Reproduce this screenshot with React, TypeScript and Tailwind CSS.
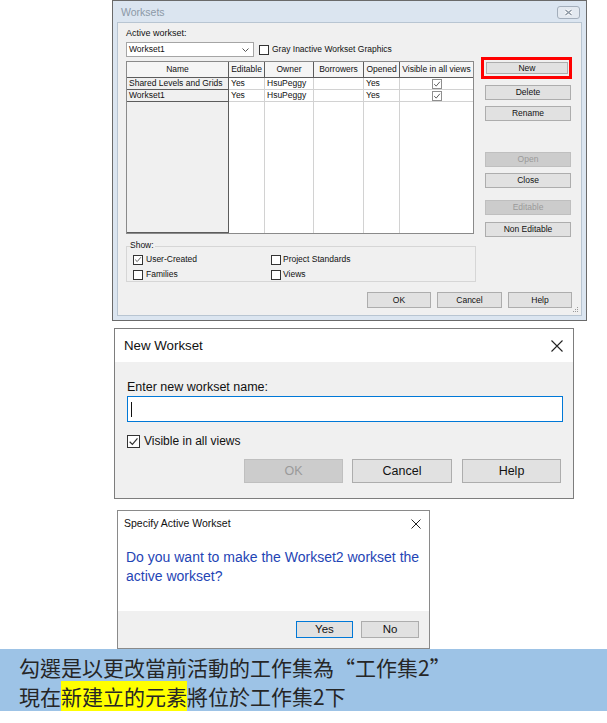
import React from "react";

const sans = "font-['Liberation_Sans',Arial,sans-serif]";

function Check({ size }: { size: number }) {
  return (
    <svg width={size - 2} height={size - 2} viewBox="0 0 10 10" className="block">
      <path d="M1.5 5.2 L4 7.6 L8.6 2.2" fill="none" stroke="#333" strokeWidth={size > 11 ? 1.1 : 1} />
    </svg>
  );
}

function Box({ checked, className }: { checked?: boolean; className: string }) {
  return (
    <div className={`flex items-center justify-center bg-white border ${className}`}>
      {checked && <Check size={11} />}
    </div>
  );
}

function WinBtn({
  label,
  disabled,
  className,
}: {
  label: string;
  disabled?: boolean;
  className: string;
}) {
  return (
    <div
      className={`flex items-center justify-center border ${
        disabled
          ? "bg-[#cccccc] border-[#bfbfbf] text-[#9a9a9a]"
          : "bg-[#e1e1e1] border-[#adadad] text-[#111]"
      } ${className}`}
    >
      {label}
    </div>
  );
}

const cols = [
  { name: "Name", w: "w-[102px]" },
  { name: "Editable", w: "w-[36px]" },
  { name: "Owner", w: "w-[49px]" },
  { name: "Borrowers", w: "w-[50px]" },
  { name: "Opened", w: "w-[36px]" },
  { name: "Visible in all views", w: "w-[73px]" },
];

const rows = [
  ["Shared Levels and Grids", "Yes", "HsuPeggy", "", "Yes"],
  ["Workset1", "Yes", "HsuPeggy", "", "Yes"],
];

function WorksetsTable() {
  return (
    <div className="w-[348px] h-[173px] border border-[#8a8a8a] bg-white flex flex-col text-[8.5px] text-[#111]">
      <div className="flex h-[16px]">
        {cols.map((c, i) => (
          <div
            key={c.name}
            className={`${c.w} flex items-center justify-center bg-[#f5f5f5] border-b border-[#5c5c5c] ${
              i < cols.length - 1 ? "border-r" : ""
            }`}
          >
            {c.name}
          </div>
        ))}
      </div>
      {rows.map((r) => (
        <div key={r[0]} className="flex h-[12px]">
          <div className="w-[102px] flex items-center pl-[2px] bg-[#f0f0f0] border-r border-b border-[#5c5c5c]">
            {r[0]}
          </div>
          {r.slice(1).map((v, i) => (
            <div
              key={i}
              className={`${cols[i + 1].w} flex items-center pl-[2px] border-r border-b border-[#d2d2d2]`}
            >
              {v}
            </div>
          ))}
          <div className="w-[73px] flex items-center justify-center border-b border-[#d2d2d2]">
            <div className="w-[10px] h-[10px] border border-[#8f8f8f] bg-white flex items-center justify-center">
              <Check size={10} />
            </div>
          </div>
        </div>
      ))}
      <div className="flex flex-1">
        <div className="w-[102px] bg-[#f0f0f0] border-r border-b border-[#5c5c5c]" />
        {cols.slice(1, 5).map((c) => (
          <div key={c.name} className={`${c.w} border-r border-[#d2d2d2]`} />
        ))}
        <div className="w-[73px]" />
      </div>
    </div>
  );
}

function WorksetsDialog() {
  return (
    <div className={`ml-[112px] w-[475px] h-[321px] border border-[#6a6a6a] bg-[#dbe5f0] flex flex-col ${sans}`}>
      <div className="h-[21px] flex items-center justify-between pl-[8px] pr-[6px]">
        <span className="text-[10.5px] text-[#8c99a7] mt-[3px]">Worksets</span>
        <div className="w-[23px] h-[13px] mt-[2px] border border-[#a3aebb] rounded-[3px] bg-[#e3e9f0] flex items-center justify-center">
          <svg width="9" height="7" viewBox="0 0 9 7">
            <path d="M1.5 1 L7.5 6 M7.5 1 L1.5 6" stroke="#fff" strokeWidth="3" />
            <path d="M1.5 1 L7.5 6 M7.5 1 L1.5 6" stroke="#8a96a3" strokeWidth="1.4" />
          </svg>
        </div>
      </div>
      <div className="relative mx-[4px] mb-[4px] flex-1 bg-[#f0f0f0] border border-[#b8c5d2] pl-[8px] pr-[8px] text-[#111]">
        <div className="pt-[5px] text-[9px] leading-[11px]">Active workset:</div>
        <div className="mt-[3px] flex items-center h-[15px]">
          <div className="w-[128px] h-[15px] border border-[#a5a5a5] bg-white flex items-center justify-between pl-[2px] pr-[4px] text-[8.5px]">
            <span>Workset1</span>
            <svg width="7" height="4" viewBox="0 0 7 4">
              <path d="M0.5 0.5 L3.5 3.5 L6.5 0.5" fill="none" stroke="#555" strokeWidth="1" />
            </svg>
          </div>
          <Box className="ml-[5px] w-[10px] h-[10px] border-[#333]" />
          <span className="ml-[3px] text-[8.5px]">Gray Inactive Workset Graphics</span>
        </div>
        <div className="flex">
          <div className="mt-[4px]">
            <WorksetsTable />
          </div>
          <div className="ml-[7px] w-[91px] flex flex-col text-[8.5px]">
            <div className="h-[22px] border-[3px] border-[#ff0000] pt-[2px] pl-[2px] pr-[1px]">
              <WinBtn label="New" className="h-[12px] w-full" />
            </div>
            <WinBtn label="Delete" className="mt-[6px] ml-[4px] w-[86px] h-[15px]" />
            <WinBtn label="Rename" className="mt-[6px] ml-[4px] w-[86px] h-[15px]" />
            <WinBtn label="Open" disabled className="mt-[31px] ml-[4px] w-[86px] h-[15px]" />
            <WinBtn label="Close" className="mt-[6px] ml-[4px] w-[86px] h-[15px]" />
            <WinBtn label="Editable" disabled className="mt-[12px] ml-[4px] w-[86px] h-[15px]" />
            <WinBtn label="Non Editable" className="mt-[7px] ml-[4px] w-[86px] h-[15px]" />
          </div>
        </div>
        <div className="relative mt-[9px] w-[350px] h-[36px] border border-[#d6d6d6] text-[8.5px] leading-[11px]">
          <span className="absolute left-[3px] top-[-7px] bg-[#f0f0f0] pr-[1px] leading-[10px]">Show:</span>
          <div className="flex pt-[7px] pl-[6px]">
            <div className="w-[138px] flex items-center">
              <Box checked className="w-[10px] h-[10px] border-[#333]" />
              <span className="ml-[3px]">User-Created</span>
            </div>
            <div className="flex items-center">
              <Box className="w-[10px] h-[10px] border-[#333]" />
              <span className="ml-[2px]">Project Standards</span>
            </div>
          </div>
          <div className="flex pt-[4px] pl-[6px]">
            <div className="w-[138px] flex items-center">
              <Box className="w-[10px] h-[10px] border-[#333]" />
              <span className="ml-[3px]">Families</span>
            </div>
            <div className="flex items-center">
              <Box className="w-[10px] h-[10px] border-[#333]" />
              <span className="ml-[2px]">Views</span>
            </div>
          </div>
        </div>
        <div className="mt-[10px] flex justify-end gap-[6px] pr-[1px] text-[8.5px]">
          <WinBtn label="OK" className="w-[64px] h-[16px]" />
          <WinBtn label="Cancel" className="w-[65px] h-[16px]" />
          <WinBtn label="Help" className="w-[64px] h-[16px]" />
        </div>
        <svg className="absolute right-[2px] bottom-[2px]" width="7" height="7" viewBox="0 0 7 7">
          <rect x="5" y="1" width="1" height="1" fill="#9a9a9a" />
          <rect x="3" y="3" width="1" height="1" fill="#9a9a9a" />
          <rect x="5" y="3" width="1" height="1" fill="#9a9a9a" />
          <rect x="1" y="5" width="1" height="1" fill="#9a9a9a" />
          <rect x="3" y="5" width="1" height="1" fill="#9a9a9a" />
          <rect x="5" y="5" width="1" height="1" fill="#9a9a9a" />
        </svg>
      </div>
    </div>
  );
}

function NewWorksetDialog() {
  return (
    <div className={`mt-[7px] ml-[114px] w-[460px] h-[171px] border border-[#7d7d7d] flex flex-col ${sans}`}>
      <div className="h-[33px] bg-white flex items-center justify-between pl-[9px] pr-[10px]">
        <span className="text-[13.3px] text-[#111]">New Workset</span>
        <svg width="12" height="12" viewBox="0 0 12 12">
          <path d="M0.5 0.5 L11.5 11.5 M11.5 0.5 L0.5 11.5" stroke="#222" strokeWidth="1.1" />
        </svg>
      </div>
      <div className="flex-1 bg-[#f0f0f0] pl-[12px] pr-[12px] text-[#111]">
        <div className="mt-[18px] text-[12.5px] leading-[15px]">Enter new workset name:</div>
        <div className="mt-[1px] w-[436px] h-[26px] border border-[#0078d7] bg-white flex items-center pl-[3px]">
          <div className="w-[1px] h-[15px] bg-[#111]" />
        </div>
        <div className="mt-[13px] h-[13px] flex items-center">
          <div className="w-[13px] h-[13px] border border-[#333] bg-white flex items-center justify-center">
            <Check size={13} />
          </div>
          <span className="ml-[4px] text-[12px] leading-[13px]">Visible in all views</span>
        </div>
        <div className="mt-[11px] flex justify-end text-[12.5px]">
          <WinBtn label="OK" disabled className="w-[99px] h-[24px]" />
          <WinBtn label="Cancel" className="ml-[9px] w-[100px] h-[24px]" />
          <WinBtn label="Help" className="ml-[10px] w-[99px] h-[24px]" />
        </div>
      </div>
    </div>
  );
}

function SpecifyDialog() {
  return (
    <div className={`mt-[11px] ml-[117px] w-[313px] h-[139px] border border-[#8a8a8a] flex flex-col ${sans}`}>
      <div className="bg-white h-[100px]">
        <div className="h-[26px] flex items-center justify-between pl-[6px] pr-[8px]">
          <span className="text-[10.5px] text-[#111]">Specify Active Workset</span>
          <svg width="10" height="10" viewBox="0 0 10 10">
            <path d="M0.5 0.5 L9.5 9.5 M9.5 0.5 L0.5 9.5" stroke="#222" strokeWidth="1" />
          </svg>
        </div>
        <div className="mt-[11px] pl-[8px] pr-[6px] text-[14px] leading-[19px] text-[#1f45b5]">
          Do you want to make the Workset2 workset the active workset?
        </div>
      </div>
      <div className="flex-1 bg-[#f0f0f0] pt-[10px] pr-[10px] flex justify-end items-start text-[11.5px]">
        <WinBtn label="Yes" className="w-[57px] h-[17px] !border-[#0078d7]" />
        <WinBtn label="No" className="ml-[8px] w-[58px] h-[17px]" />
      </div>
    </div>
  );
}

export default function App() {
  return (
    <div className="w-[607px] h-[723px] bg-white overflow-hidden flex flex-col">
      <WorksetsDialog />
      <NewWorksetDialog />
      <SpecifyDialog />
      <div className="h-[62px] bg-[#9dc3e6] pl-[19px] pt-[4px] text-[21px] leading-[29px] text-[#262626] font-['Noto_Sans_CJK_TC','Noto_Sans_CJK_SC',sans-serif]">
        <div>勾選是以更改當前活動的工作集為“工作集2”</div>
        <div>
          現在<span className="bg-[#ffff00]">新建立的元素</span>將位於工作集2下
        </div>
      </div>
    </div>
  );
}
